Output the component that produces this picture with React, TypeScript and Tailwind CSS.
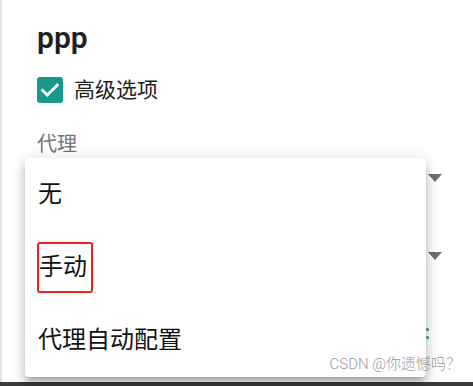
import React from 'react';

const OPTIONS = ['无', '手动', '代理自动配置'];

function Arrow() {
  return (
    <svg width="14" height="8" viewBox="0 0 14 8" className="block">
      <path d="M0 0h14L7 8z" fill="#6f6f6f" />
    </svg>
  );
}

export default function App() {
  return (
    <div
      className="relative flex h-[386px] w-[473px] flex-col overflow-hidden bg-white"
      style={{ fontFamily: 'Roboto, "Noto Sans CJK SC", sans-serif' }}
    >
      <div className="flex flex-1 border-l-2 border-[#e4e4e4]">
        <div className="flex flex-1 flex-col pl-[35px] pr-[31px]">
          <h1 className="mt-[18px] text-[30px] leading-[40px] font-semibold text-[#1f1f1f]">ppp</h1>
          <label className="mt-[18px] flex items-center gap-[11px]">
            <span className="flex h-[26px] w-[26px] items-center justify-center rounded-[3px] bg-[#16998a]">
              <svg width="22" height="22" viewBox="0 0 24 24" fill="none">
                <path d="M4 12.5l5 5L20 6.5" stroke="#fff" strokeWidth="3.2" strokeLinecap="square" />
              </svg>
            </span>
            <span className="text-[21px] leading-[28px] text-[#222]">高级选项</span>
          </label>
          <div className="mt-[26px] text-[20px] leading-[28px] text-[#757575]">代理</div>
          <div className="mt-[16px] flex justify-end">
            <Arrow />
          </div>
          <div className="mt-[70px] flex justify-end">
            <Arrow />
          </div>
          <div className="mt-[68px] flex flex-col items-end gap-[5px] pr-[13px]">
            <span className="h-[3px] w-[3px] rounded-full bg-[#16998a]" />
            <span className="h-[3px] w-[3px] rounded-full bg-[#16998a]" />
          </div>
        </div>
      </div>
      <div className="h-[4px] bg-[#3b3b3b]" />

      <ul className="absolute left-[25px] top-[158px] w-[401px] rounded-[4px] bg-white shadow-[0_5px_5px_-3px_rgba(0,0,0,0.2),0_8px_10px_1px_rgba(0,0,0,0.14),0_3px_14px_2px_rgba(0,0,0,0.12)]">
        {OPTIONS.map((opt) => (
          <li key={opt} className="flex h-[73px] items-center px-[13px]">
            {opt === '手动' ? (
              <span className="-ml-[1px] rounded-[3px] border-2 border-[#f0201c] py-[9px] pr-[4px] text-[24px] leading-[29px] text-[#111]">
                {opt}
              </span>
            ) : (
              <span className="text-[24px] leading-[29px] text-[#111]">{opt}</span>
            )}
          </li>
        ))}
      </ul>

      <div className="absolute right-[12px] top-[354px] text-[15px] leading-[20px] font-light text-[#8a8a8a]/90">
        CSDN @你遗憾吗？
      </div>
    </div>
  );
}
